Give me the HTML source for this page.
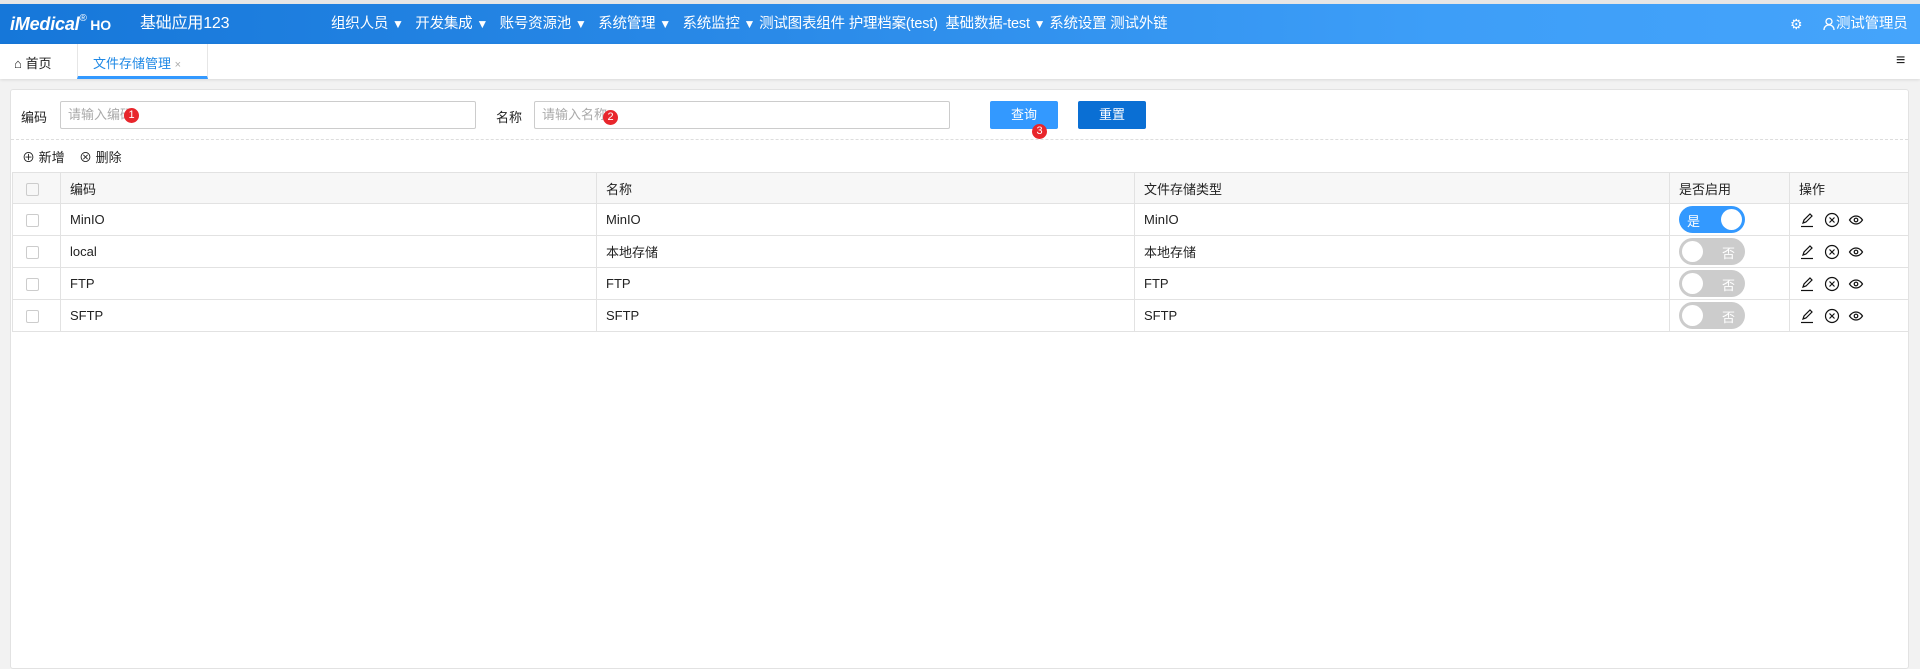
<!DOCTYPE html>
<html><head><meta charset="utf-8"><style>
*{box-sizing:border-box;margin:0;padding:0}
body{width:1920px;height:664px;overflow:hidden;background:#f2f2f2;font-family:"Liberation Sans","Noto Sans CJK SC",sans-serif;font-size:13px;color:#222;position:relative}
.abs{position:absolute}
.hdr{left:0;top:4px;width:1920px;height:40px;background:linear-gradient(90deg,#1677d9 0%,#2a8ae8 40%,#3d9ef8 75%,#45a4fb 100%);color:#fff;box-shadow:0 2px 3px rgba(0,0,0,.2)}
.nav{top:0;line-height:40px;font-size:14.5px;white-space:nowrap;letter-spacing:-0.2px}
.tabs{left:0;top:44px;width:1920px;height:35px;background:#fff;box-shadow:0 1px 3px rgba(0,0,0,.1)}
.panel{left:10px;top:89px;width:1899px;height:580px;background:#fff;border:1px solid #e2e2e2;border-radius:3px}
.inp{height:28px;border:1px solid #ccc;border-radius:2px;color:#aaa;padding-left:7px;line-height:26px;font-size:13px}
.btn{height:28px;width:68px;color:#fff;text-align:center;line-height:28px;border-radius:2px;font-size:13px}
.dot{width:15px;height:15px;border-radius:50%;background:#e8262c;color:#fff;font-size:11px;text-align:center;line-height:15px}
table{position:absolute;left:12px;top:172px;border-collapse:collapse;width:1897px}
td{border:1px solid #e2e2e2;height:32px;padding-left:9px;font-size:13px}
tr.h td{background:#f7f7f7;height:31px}
.cb{width:13px;height:13px;border:1px solid #ccc;border-radius:2px;display:inline-block;vertical-align:middle;margin-left:4px}
.tg{width:66px;height:27px;border-radius:14px;position:relative;color:#fff;font-size:13px}
.tg .k{position:absolute;top:3px;width:21px;height:21px;border-radius:50%;background:#fff}
svg{vertical-align:middle}
</style></head><body>
<div class="abs" style="left:0;top:0;width:1920px;height:4px;background:#e6e6e6"></div>
<div class="abs hdr">
 <div class="abs nav" style="left:10px;font-size:18px;font-weight:bold;font-style:italic">iMedical<span style="font-size:10px;vertical-align:top;font-style:normal;font-weight:normal;position:relative;top:-5px">®</span><span style="font-style:normal;font-size:14px"> HO</span></div>
 <div class="abs nav" style="left:140px;font-size:16px">基础应用123</div>
 <div class="abs nav" style="left:331px">组织人员 <small>▼</small> &nbsp;&nbsp;开发集成 <small>▼</small> &nbsp;&nbsp;账号资源池 <small>▼</small> &nbsp;&nbsp;系统管理 <small>▼</small> &nbsp;&nbsp;系统监控 <small>▼</small> 测试图表组件 护理档案(test) &nbsp;基础数据-test <small>▼</small> 系统设置 测试外链</div>
 <div class="abs nav" style="left:1790px;font-size:14px">⚙</div>
 <div class="abs nav" style="left:1822px"><svg width="14" height="14" viewBox="0 0 14 14" fill="none" stroke="#fff" stroke-width="1.3"><circle cx="7" cy="4.5" r="3"/><path d="M2 13c0-3 2-5 5-5s5 2 5 5"/></svg>测试管理员</div>
</div>
<div class="abs tabs">
 <div class="abs" style="left:14px;top:9px;font-size:13px">⌂ 首页</div>
 <div class="abs" style="left:77px;top:0;width:131px;height:35px;border-left:1px solid #e6e6e6;border-right:1px solid #e6e6e6;border-bottom:3px solid #3399ff;color:#1e88e5;padding:9px 0 0 15px;font-size:13px">文件存储管理 <span style="color:#aaa;font-size:11px">×</span></div>
 <div class="abs" style="left:1896px;top:8px;font-size:16px;font-weight:bold">≡</div>
</div>
<div class="abs panel"></div>
<div class="abs" style="left:21px;top:107px">编码</div>
<div class="abs inp" style="left:60px;top:101px;width:416px">请输入编码</div>
<div class="abs" style="left:496px;top:107px">名称</div>
<div class="abs inp" style="left:534px;top:101px;width:416px">请输入名称</div>
<div class="abs btn" style="left:990px;top:101px;background:#3399ff">查询</div>
<div class="abs btn" style="left:1078px;top:101px;background:#0a6fd4">重置</div>
<div class="abs dot" style="left:124px;top:108px">1</div>
<div class="abs dot" style="left:603px;top:110px">2</div>
<div class="abs dot" style="left:1032px;top:124px">3</div>
<div class="abs" style="left:11px;top:139px;width:1897px;border-top:1px dashed #ddd"></div>
<div class="abs" style="left:22px;top:147px">⊕ 新增 &nbsp;&nbsp; ⊗ 删除</div>
<table>
<colgroup><col style="width:48px"><col style="width:536px"><col style="width:538px"><col style="width:535px"><col style="width:120px"><col></colgroup>
<tr class="h"><td><span class="cb"></span></td><td>编码</td><td>名称</td><td>文件存储类型</td><td>是否启用</td><td>操作</td></tr>
<tr><td><span class="cb"></span></td><td>MinIO</td><td>MinIO</td><td>MinIO</td><td><div class="tg" style="background:#3399ff"><span class="abs" style="left:8px;top:5px">是</span><div class="k" style="right:3px"></div></div></td><td class="op"></td></tr>
<tr><td><span class="cb"></span></td><td>local</td><td>本地存储</td><td>本地存储</td><td><div class="tg" style="background:#ccc"><div class="k" style="left:3px"></div><span class="abs" style="right:10px;top:5px">否</span></div></td><td class="op"></td></tr>
<tr><td><span class="cb"></span></td><td>FTP</td><td>FTP</td><td>FTP</td><td><div class="tg" style="background:#ccc"><div class="k" style="left:3px"></div><span class="abs" style="right:10px;top:5px">否</span></div></td><td class="op"></td></tr>
<tr><td><span class="cb"></span></td><td>SFTP</td><td>SFTP</td><td>SFTP</td><td><div class="tg" style="background:#ccc"><div class="k" style="left:3px"></div><span class="abs" style="right:10px;top:5px">否</span></div></td><td class="op"></td></tr>
</table>
<script>
var s='<svg width="16" height="16" viewBox="0 0 16 16" fill="none" stroke="#111" stroke-width="1.2"><path d="M4 11l1-3 6-6 2 2-6 6z"/><path d="M2 14.5h12"/></svg> <svg width="16" height="16" viewBox="0 0 16 16" fill="none" stroke="#111" stroke-width="1.2" style="margin-left:5px"><circle cx="8" cy="8" r="6.5"/><path d="M5.5 5.5l5 5M10.5 5.5l-5 5"/></svg> <svg width="16" height="16" viewBox="0 0 16 16" fill="none" stroke="#111" stroke-width="1.2" style="margin-left:5px"><path d="M1.5 8c2-3 4-4 6.5-4s4.5 1 6.5 4c-2 3-4 4-6.5 4S3.5 11 1.5 8z"/><circle cx="8" cy="8" r="1.8"/></svg>';
document.querySelectorAll('.op').forEach(function(e){e.innerHTML=s;});
</script>
</body></html>
